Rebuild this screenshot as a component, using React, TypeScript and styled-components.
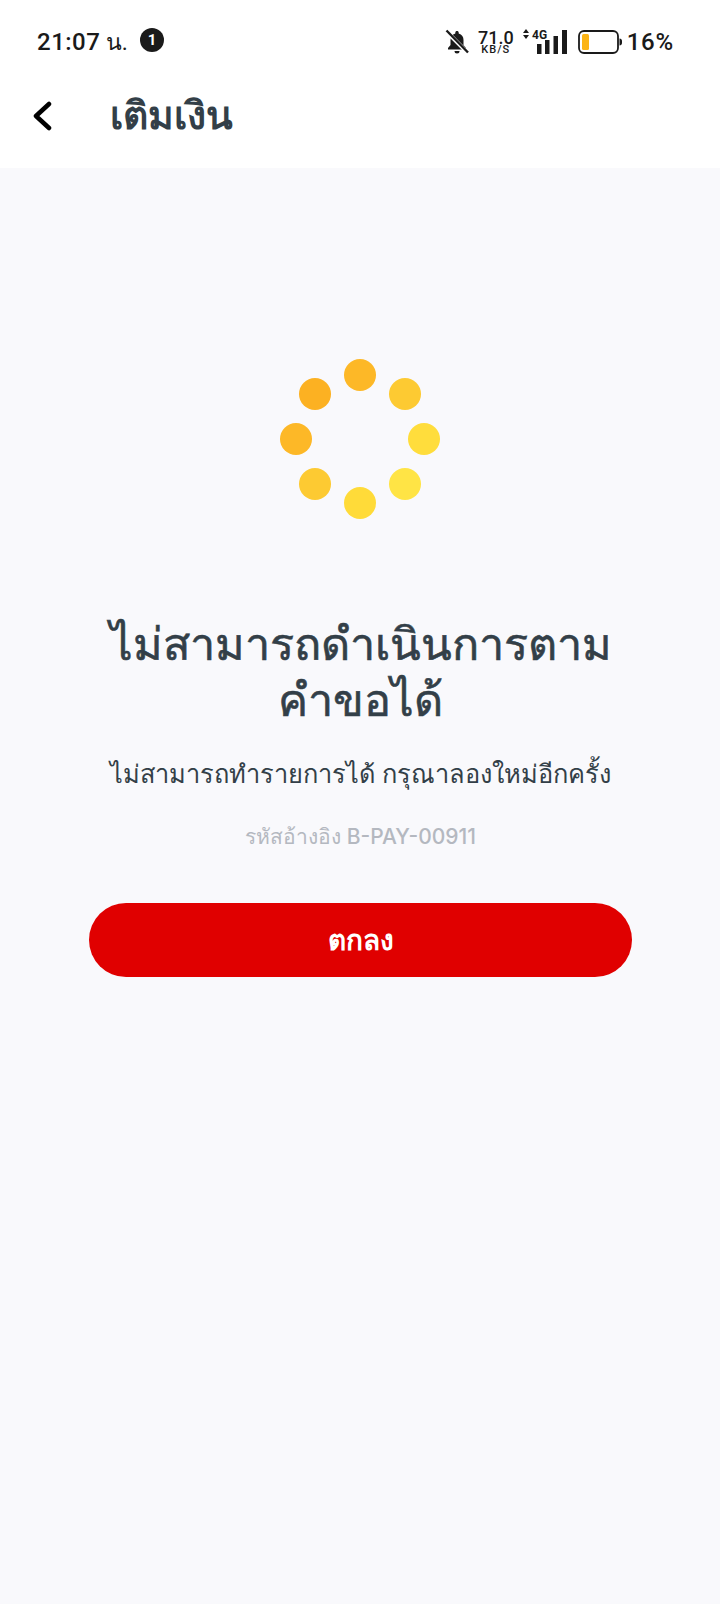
import styled, { createGlobalStyle } from 'styled-components';

const GlobalStyle = createGlobalStyle`
  html, body {
    margin: 0;
    padding: 0;
    background: #f9f9fc;
  }
  body {
    font-family: Inter, Roboto, "Noto Sans", "DejaVu Sans", sans-serif;
  }
`;

const Page = styled.div`
  width: 720px;
  height: 1604px;
  display: flex;
  flex-direction: column;
  background: #f9f9fc;
  overflow: hidden;
`;

const Top = styled.header`
  height: 168px;
  background: #fff;
  display: flex;
  flex-direction: column;
`;

const StatusBar = styled.div`
  height: 84px;
  padding: 0 46px 0 37px;
  box-sizing: border-box;
  display: flex;
  align-items: center;
  justify-content: space-between;
  color: #1a1a1a;
`;

const StatusGroup = styled.div`
  display: flex;
  align-items: center;
`;

const Clock = styled.span`
  font-family: Roboto, sans-serif;
  font-size: 24px;
  font-weight: 500;
  letter-spacing: 0.5px;
`;

const ClockUnit = styled.span`
  margin-left: -1px;
  font-size: 23px;
  font-weight: 400;
  letter-spacing: 0;
`;

const Badge = styled.span`
  width: 24px;
  height: 24px;
  margin: -4px 0 0 12px;
  border-radius: 50%;
  background: #1a1a1a;
  color: #fff;
  font-family: Roboto, sans-serif;
  font-size: 15px;
  font-weight: 700;
  display: flex;
  align-items: center;
  justify-content: center;
`;

const Speed = styled.span`
  margin-left: 9px;
  display: flex;
  flex-direction: column;
  align-items: center;
  font-family: Roboto, sans-serif;
  font-weight: 500;
`;

const SpeedValue = styled.span`
  font-size: 18px;
  line-height: 15px;
`;

const SpeedUnit = styled.span`
  font-size: 11px;
  line-height: 10px;
  letter-spacing: 1px;
`;

const NetworkIcon = styled.svg`
  margin-left: 6px;
`;

const BatteryIcon = styled.svg`
  margin-left: 10px;
`;

const Percent = styled.span`
  margin-left: 5px;
  font-family: Roboto, sans-serif;
  font-size: 24px;
  font-weight: 500;
  letter-spacing: 0.8px;
`;

const NavBar = styled.div`
  flex: 1;
  display: flex;
  align-items: center;
  padding: 0 0 22px 32px;
`;

const BackIcon = styled.svg`
  margin-top: 2px;
`;

const NavTitle = styled.h1`
  margin: -1px 0 0 58px;
  font-size: 39px;
  font-weight: 700;
  color: #333f48;
`;

const Content = styled.main`
  display: flex;
  flex-direction: column;
  align-items: center;
  padding: 191px 88px 0 89px;
`;

const Spinner = styled.svg`
  margin-right: 1px;
`;

const Heading = styled.h2`
  margin: 97px 0 0;
  width: 100%;
  font-size: 45px;
  line-height: 56px;
  font-weight: 500;
  -webkit-text-stroke: 0.6px #333f48;
  text-align: center;
  color: #333f48;
`;

const Message = styled.p`
  margin: 26px -10px 0;
  font-size: 25.400px;
  line-height: 40px;
  color: #333f48;
  white-space: nowrap;
`;

const Reference = styled.p`
  margin: 28px 0 0;
  font-size: 21px;
  line-height: 30px;
  font-weight: 500;
  color: #b4b8c0;
`;

const OkButton = styled.button`
  width: 100%;
  height: 74px;
  margin-top: 51px;
  border: 0;
  border-radius: 37px;
  background: #e00000;
  color: #fff;
  font-family: inherit;
  font-size: 28px;
  font-weight: 600;
`;

const dots = [
  { cx: 80, cy: 16, fill: '#fdb827' },
  { cx: 125, cy: 35, fill: '#fdca32' },
  { cx: 144, cy: 80, fill: '#ffdd3c' },
  { cx: 125, cy: 125, fill: '#ffe445' },
  { cx: 80, cy: 144, fill: '#ffdb39' },
  { cx: 35, cy: 125, fill: '#fdca32' },
  { cx: 16, cy: 80, fill: '#fdb827' },
  { cx: 35, cy: 35, fill: '#fcb122' },
];

export default function App() {
  return (
    <Page>
      <GlobalStyle />
      <Top>
        <StatusBar>
          <StatusGroup>
            <Clock>
              21:07 <ClockUnit>น.</ClockUnit>
            </Clock>
            <Badge>1</Badge>
          </StatusGroup>
          <StatusGroup>
            <svg width="24" height="26" viewBox="0 0 24 26">
              <path d="M12 2c-1 0-1.700.7-1.700 1.700v.8C7 5.300 5.500 8 5.500 11v5L3 19v1.500h18V19l-2.500-3v-5c0-3-1.500-5.700-4.800-6.500v-.8C13.700 2.700 13 2 12 2z" fill="#1a1a1a" />
              <path d="M9.500 22a2.500 2.500 0 0 0 5 0z" fill="#1a1a1a" />
              <path d="M1.500 2.500L23 24" stroke="#fff" strokeWidth="4" />
              <path d="M1.500 1.500L23 23.500" stroke="#1a1a1a" strokeWidth="2.400" />
            </svg>
            <Speed>
              <SpeedValue>71.0</SpeedValue>
              <SpeedUnit>KB/S</SpeedUnit>
            </Speed>
            <NetworkIcon width="48" height="26" viewBox="0 0 48 26">
              <path d="M3 4l3-4 3 4zM3 6l3 4 3-4z" fill="#1a1a1a" />
              <text x="12" y="10" fontFamily="Roboto, sans-serif" fontSize="12" fontWeight="700" fill="#1a1a1a">4G</text>
              <rect x="17" y="15" width="4.500" height="10" fill="#1a1a1a" />
              <rect x="25" y="11" width="4.500" height="14" fill="#1a1a1a" />
              <rect x="33.500" y="7" width="4.500" height="18" fill="#1a1a1a" />
              <rect x="42" y="1" width="5" height="24" fill="#1a1a1a" />
            </NetworkIcon>
            <BatteryIcon width="44" height="24" viewBox="0 0 44 24">
              <rect x="1" y="1" width="39" height="22" rx="5" fill="none" stroke="#1a1a1a" strokeWidth="1.800" />
              <rect x="4" y="4" width="7" height="16" rx="1.500" fill="#fcb415" />
              <path d="M41.500 8.500c1.500 0 2.500 1 2.500 2.500v2c0 1.500-1 2.500-2.500 2.500z" fill="#1a1a1a" />
            </BatteryIcon>
            <Percent>16%</Percent>
          </StatusGroup>
        </StatusBar>
        <NavBar>
          <BackIcon width="20" height="30" viewBox="0 0 20 30">
            <path d="M17 3L4 15l13 12" fill="none" stroke="#000" strokeWidth="4.500" strokeLinecap="round" strokeLinejoin="round" />
          </BackIcon>
          <NavTitle>เติมเงิน</NavTitle>
        </NavBar>
      </Top>
      <Content>
        <Spinner width="160" height="160" viewBox="0 0 160 160">
          {dots.map((d) => (
            <circle key={`${d.cx}-${d.cy}`} cx={d.cx} cy={d.cy} r="16" fill={d.fill} />
          ))}
        </Spinner>
        <Heading>ไม่สามารถดำเนินการตามคำขอได้</Heading>
        <Message>ไม่สามารถทำรายการได้ กรุณาลองใหม่อีกครั้ง</Message>
        <Reference>รหัสอ้างอิง B-PAY-00911</Reference>
        <OkButton>ตกลง</OkButton>
      </Content>
    </Page>
  );
}
